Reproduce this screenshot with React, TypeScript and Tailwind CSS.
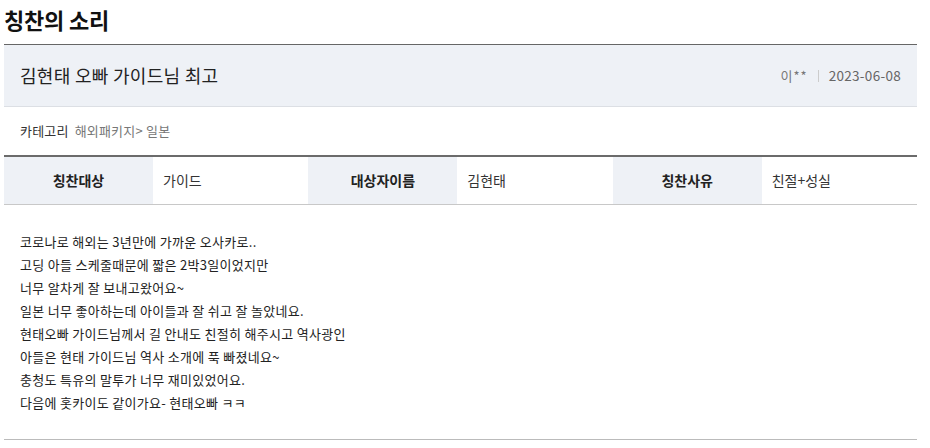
import React from "react";

const font = { fontFamily: '"Noto Sans CJK KR", "Noto Sans", sans-serif' };

export default function App() {
  const lines = [
    "코로나로 해외는 3년만에 가까운 오사카로..",
    "고딩 아들 스케줄때문에 짧은 2박3일이었지만",
    "너무 알차게 잘 보내고왔어요~",
    "일본 너무 좋아하는데 아이들과 잘 쉬고 잘 놀았네요.",
    "현태오빠 가이드님께서 길 안내도 친절히 해주시고 역사광인",
    "아들은 현태 가이드님 역사 소개에 푹 빠졌네요~",
    "충청도 특유의 말투가 너무 재미있었어요.",
    "다음에 홋카이도 같이가요- 현태오빠 ㅋㅋ",
  ];
  const cells = [
    ["칭찬대상", "가이드"],
    ["대상자이름", "김현태"],
    ["칭찬사유", "친절+성실"],
  ];
  return (
    <div className="bg-white w-[930px] h-[448px] overflow-hidden text-[#222]" style={font}>
      <div className="ml-[4px] w-[913px]">
        <h1 className="h-[44px] pt-[4px] text-[22px] leading-[30px] font-bold text-[#111] tracking-[-0.2px]">
          칭찬의 소리
        </h1>
        <div className="border-t border-[#666] border-b border-b-[#dcdfe4] bg-[#eef1f6] h-[63px] flex items-center justify-between pl-[16px] pr-[16px]">
          <div className="text-[18px] text-[#222] tracking-[0.3px]">김현태 오빠 가이드님 최고</div>
          <div className="flex items-center text-[13px] text-[#777]">
            <span className="tracking-[1px]">이**</span>
            <span className="mx-[10px] w-px h-[12px] bg-[#ccc]" />
            <span className="text-[#666] text-[13.5px] tracking-[0.3px]">2023-06-08</span>
          </div>
        </div>
        <div className="h-[48px] flex items-center pl-[16px] text-[13px] tracking-[0.2px]">
          <span className="text-[#333]">카테고리</span>
          <span className="ml-[6px] text-[#777]">해외패키지&gt; 일본</span>
        </div>
        <div className="border-t-2 border-[#6b6b6b] border-b border-b-[#c8c8c8] flex h-[50px]">
          {cells.map(([k, v], i) => (
            <div key={i} className="flex flex-1">
              <div className="w-[149px] bg-[#eef1f6] flex items-center justify-center text-[14px] font-bold text-[#222]">
                {k}
              </div>
              <div className="flex-1 flex items-center pl-[10px] text-[14px] text-[#333]">{v}</div>
            </div>
          ))}
        </div>
        <div className="pt-[25px] pb-[25px] pl-[16px] border-b border-[#bbb] text-[13px] leading-[23px] text-[#222] tracking-[0.3px]">
          {lines.map((l, i) => (
            <div key={i}>{l}</div>
          ))}
        </div>
      </div>
    </div>
  );
}
